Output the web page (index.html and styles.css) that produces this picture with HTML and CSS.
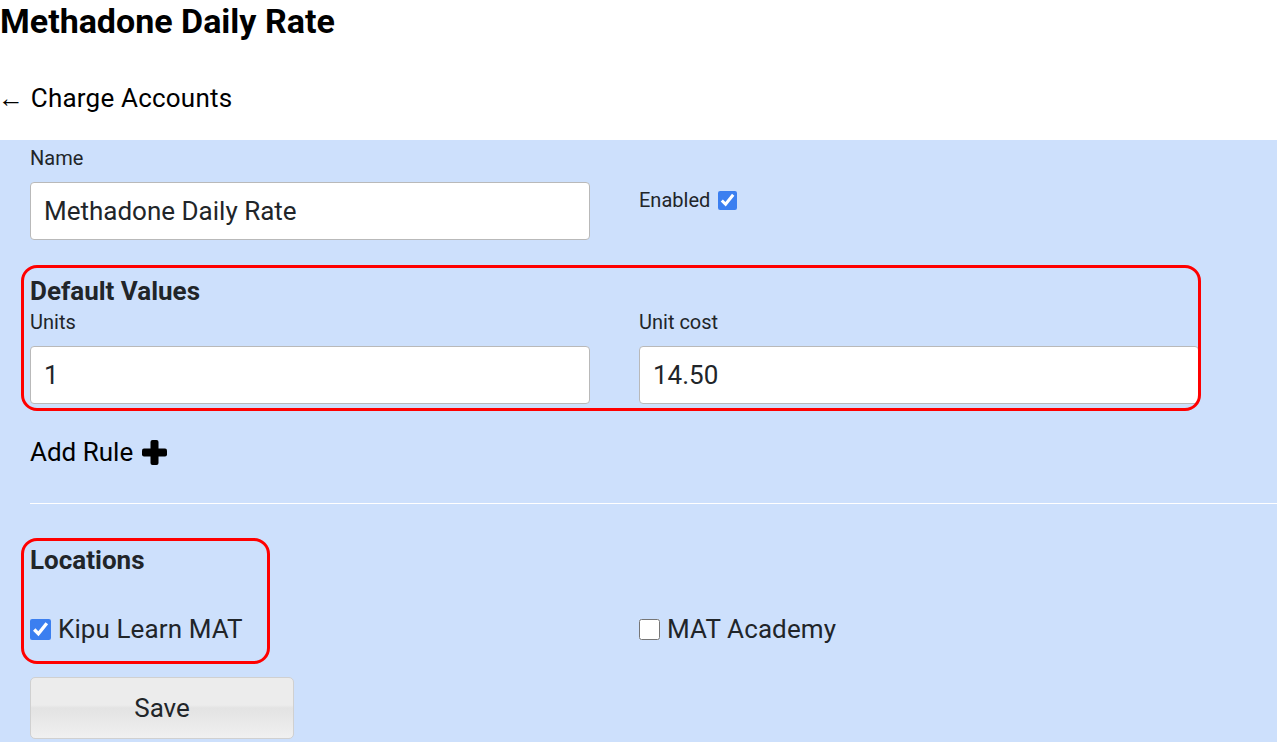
FILE: index.html
```html
<!DOCTYPE html>
<html lang="en">
<head>
<meta charset="utf-8">
<title>Methadone Daily Rate</title>
<link rel="stylesheet" href="styles.css">
</head>
<body>
<h1 class="title">Methadone Daily Rate</h1>
<a class="back" href="#">&larr; Charge Accounts</a>
<form class="panel">
  <div class="row">
    <div class="field">
      <label class="label" for="name">Name</label>
      <input class="input" id="name" type="text" value="Methadone Daily Rate">
    </div>
    <div class="field enabled-field">
      <label class="label enabled">Enabled <input class="check small" type="checkbox" checked></label>
    </div>
  </div>

  <div class="group defaults annot">
    <h2 class="heading">Default Values</h2>
    <div class="row">
      <div class="field">
        <label class="label" for="units">Units</label>
        <input class="input" id="units" type="text" value="1">
      </div>
      <div class="field">
        <label class="label" for="cost">Unit cost</label>
        <input class="input" id="cost" type="text" value="14.50">
      </div>
    </div>
  </div>

  <div class="add-rule">Add Rule
    <svg class="plus" width="27" height="27" viewBox="0 0 27 27" aria-hidden="true">
      <rect x="9.5" y="1" width="8" height="25" rx="2" fill="#000"/>
      <rect x="1" y="9.5" width="25" height="8" rx="2" fill="#000"/>
    </svg>
  </div>

  <hr class="sep">

  <div class="group locations annot">
    <h2 class="heading">Locations</h2>
  </div>
  <div class="row loc-row">
    <label class="loc"><input class="check" type="checkbox" checked> Kipu Learn MAT</label>
    <label class="loc"><input class="check" type="checkbox"> MAT Academy</label>
  </div>

  <button class="save" type="button">Save</button>
</form>
</body>
</html>
```

FILE: styles.css
```css
html, body {
  margin: 0;
  padding: 0;
  background: #ffffff;
  font-family: Roboto, "Liberation Sans", Arial, sans-serif;
  color: #212529;
  overflow: hidden;
}

.title {
  margin: 0;
  padding-top: 1px;
  font-size: 34px;
  line-height: 40px;
  font-weight: 700;
  color: #000;
}

.back {
  display: block;
  margin-top: 40px;
  font-size: 26px;
  line-height: 34px;
  color: #000;
  text-decoration: none;
  margin-left: -2px;
  letter-spacing: 0.2px;
}

.panel {
  margin-top: 25px;
  background: #cde0fc;
  padding: 8px 0 20px 30px;
  min-height: 600px;
}

.row {
  display: grid;
  grid-template-columns: 560px 560px;
  column-gap: 49px;
}

.field {
  display: flex;
  flex-direction: column;
}

.label {
  font-size: 20px;
  line-height: 20px;
  color: #212529;
  margin-bottom: 14px;
}

.enabled-field {
  padding-top: 42px;
}

.enabled {
  display: flex;
  align-items: center;
  gap: 8px;
}

.input {
  box-sizing: border-box;
  width: 560px;
  height: 58px;
  border: 1px solid #b9b9b9;
  border-radius: 4px;
  background: #fff;
  padding: 0 13px;
  font-family: Roboto, "Liberation Sans", Arial, sans-serif;
  font-size: 26px;
  color: #212529;
  outline: none;
}

.check {
  width: 21px;
  height: 21px;
  margin: 0;
  accent-color: #3b7ff0;
}

.check.small {
  width: 19px;
  height: 19px;
}

.annot {
  position: relative;
}

.annot::after {
  content: "";
  position: absolute;
  border: 3px solid #ff0000;
  border-radius: 16px;
  pointer-events: none;
}

.defaults {
  margin-top: 37px;
  width: 1169px;
}

.defaults::after {
  top: -12px;
  left: -9px;
  width: 1174px;
  bottom: -7px;
}

.heading {
  margin: 0 0 7px 0;
  font-size: 26px;
  line-height: 28px;
  font-weight: 700;
  color: #212529;
}

.add-rule {
  margin-top: 34px;
  display: flex;
  align-items: center;
  gap: 8px;
  font-size: 26px;
  line-height: 28px;
  color: #000;
}

.plus {
  display: block;
}

.sep {
  margin: 37px 0 0 0;
  border: 0;
  border-top: 1px solid #ffffff;
  height: 0;
}

.locations {
  margin-top: 42px;
  width: 240px;
}

.locations .heading {
  margin: 0;
}

.locations::after {
  top: -8px;
  left: -9px;
  width: 243px;
  height: 120px;
}

.loc-row {
  margin-top: 41px;
}

.loc {
  display: flex;
  align-items: center;
  gap: 7px;
  font-size: 26px;
  line-height: 28px;
  color: #212529;
  letter-spacing: 0.1px;
}

.save {
  margin-top: 34px;
  width: 264px;
  height: 62px;
  border: 1px solid #d0d0d0;
  border-radius: 5px;
  background: linear-gradient(#ececec 0%, #ececec 45%, #e3e3e3 50%, #f0f0f0 100%);
  font-family: Roboto, "Liberation Sans", Arial, sans-serif;
  font-size: 26px;
  color: #212529;
}
```
